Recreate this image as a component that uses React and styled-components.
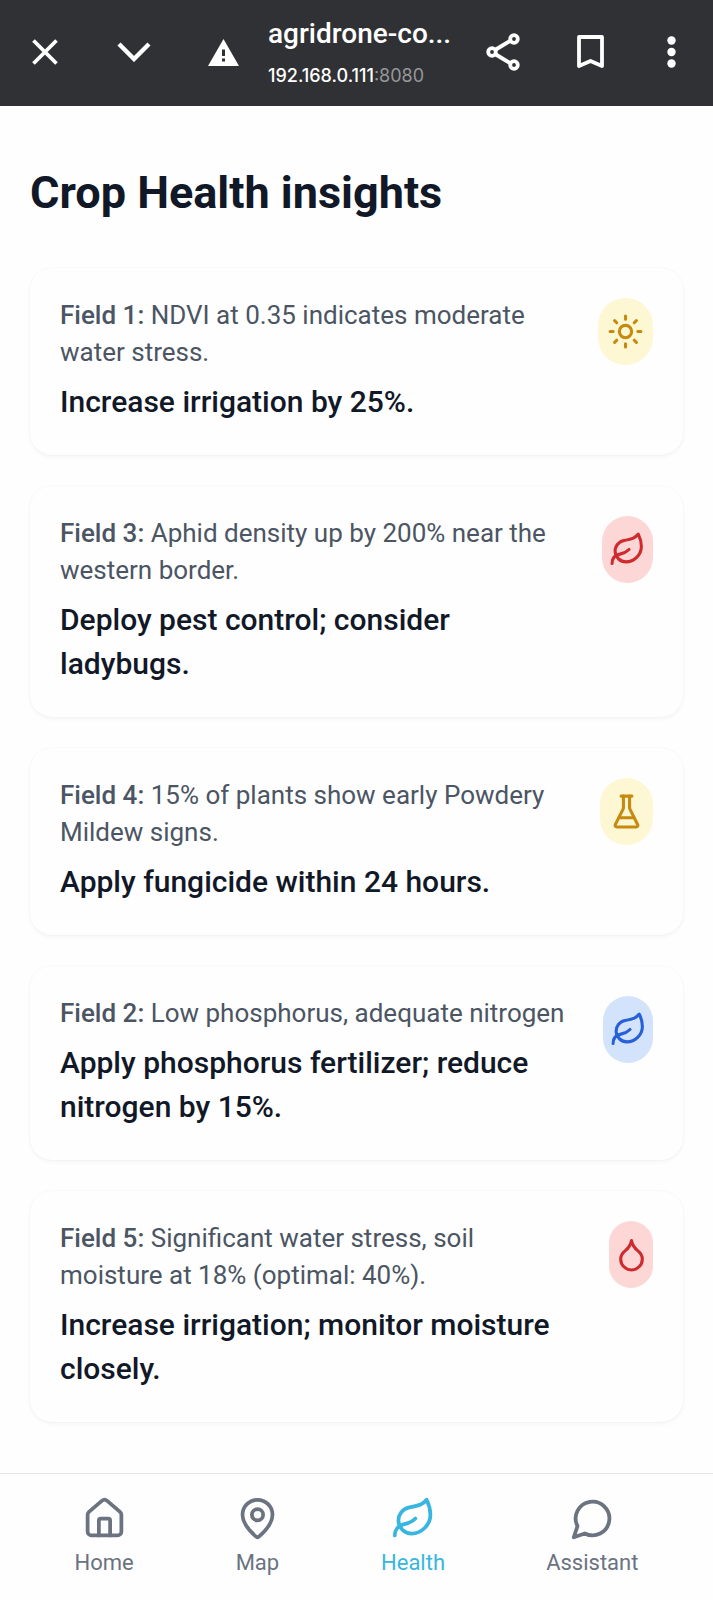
import React from "react";
import styled, { createGlobalStyle } from "styled-components";

const GlobalStyle = createGlobalStyle`
  *, *::before, *::after { box-sizing: border-box; }
  body {
    margin: 0;
    background: #fefefe;
    color: #111827;
    font-family: Roboto, "Liberation Sans", sans-serif;
  }
`;

const Page = styled.div`
  min-height: 100vh;
  display: flex;
  flex-direction: column;
`;

const BrowserBar = styled.header`
  display: flex;
  align-items: center;
  height: 106px;
  padding: 0 15px 2px 18px;
  background: #303134;
  color: #fff;
`;

const BarButton = styled.button`
  display: grid;
  place-items: center;
  flex: none;
  width: 54px;
  height: 54px;
  margin: 0 ${(p) => p.$gap || 0}px 0 0;
  padding: 0;
  border: 0;
  background: none;
  color: inherit;
`;

const Address = styled.div`
  flex: 1;
  min-width: 0;
  padding-top: 6px;
`;

const SiteTitle = styled.div`
  font-size: 28px;
  line-height: 40px;
  font-weight: 500;
  white-space: nowrap;
`;

const SiteHost = styled.div`
  padding-top: 2px;
  font-family: Inter, Roboto, sans-serif;
  font-size: 18px;
  line-height: 40px;
  font-weight: 500;
`;

const Port = styled.span`
  color: #96979a;
  font-weight: 400;
`;

const Main = styled.main`
  flex: 1;
  padding: 60px 30px 50px;
`;

const Title = styled.h1`
  margin: 0 0 48px;
  font-size: 45px;
  line-height: 54px;
  font-weight: 700;
`;

const CardList = styled.div`
  display: grid;
  gap: 31px;
`;

const Card = styled.article`
  display: flex;
  justify-content: space-between;
  align-items: flex-start;
  gap: 30px;
  padding: 29px 30px 31px;
  border-radius: 22px;
  background: #fefefe;
  box-shadow: 0 2px 4px rgba(0, 0, 0, 0.04), 0 0 2px rgba(0, 0, 0, 0.05);
`;

const CardText = styled.div`
  flex: 1;
  min-width: 0;
`;

const Finding = styled.p`
  margin: 0 0 9px;
  font-size: 26px;
  line-height: 37px;
  color: #4b5563;
`;

const Field = styled.span`
  font-weight: 500;
`;

const Advice = styled.p`
  margin: 0;
  font-size: 30px;
  line-height: 44px;
  font-weight: 500;
`;

const tones = {
  yellow: { back: "#fef7d3", ink: "#c58a0e" },
  red: { back: "#fdd6d6", ink: "#cf2a2e" },
  blue: { back: "#d3e3fc", ink: "#2860d8" },
};

const Badge = styled.div`
  display: grid;
  place-items: center;
  flex: none;
  width: ${(p) => p.$width}px;
  height: 67px;
  margin-top: 1px;
  border-radius: 34px;
  background: ${(p) => tones[p.$tone].back};
  color: ${(p) => tones[p.$tone].ink};
`;

const TabBar = styled.nav`
  display: flex;
  justify-content: space-around;
  padding: 22px 24px 19px;
  border-top: 1px solid #e5e7eb;
`;

const Tab = styled.a`
  display: flex;
  flex-direction: column;
  align-items: center;
  gap: 4px;
  font-size: 22px;
  line-height: 36px;
  text-decoration: none;
  color: ${(p) => (p.$active ? "#38b6e0" : "#6b7280")};
`;

const Line = styled.svg`
  display: block;
  fill: none;
  stroke: currentColor;
  stroke-width: 2;
  stroke-linecap: round;
  stroke-linejoin: round;
`;

const shapes = {
  sun: (
    <>
      <circle cx="12" cy="12" r="4" />
      <path d="M12 2v2M12 20v2M4.93 4.93l1.41 1.41M17.66 17.66l1.41 1.41M2 12h2M20 12h2M6.34 17.66l-1.41 1.41M19.07 4.93l-1.41 1.41" />
    </>
  ),
  leaf: (
    <>
      <path d="M11 20A7 7 0 0 1 9.8 6.1C15.5 5 17 4.48 19 2c1 2 2 4.18 2 8 0 5.5-4.78 10-10 10Z" />
      <path d="M2 21c0-3 1.85-5.36 5.08-6C9.5 14.52 12 13 13 12" />
    </>
  ),
  flask: (
    <>
      <path d="M10 2v7.527a2 2 0 0 1-.211.896L4.72 20.55a1 1 0 0 0 .9 1.45h12.76a1 1 0 0 0 .9-1.45l-5.069-10.127A2 2 0 0 1 14 9.527V2" />
      <path d="M8.5 2h7M7 16h10" />
    </>
  ),
  drop: (
    <path d="M12 22a7 7 0 0 0 7-7c0-2-1-3.9-3-5.5s-3.5-4-4-6.5c-.5 2.5-2 4.9-4 6.5C6 11.1 5 13 5 15a7 7 0 0 0 7 7z" />
  ),
  home: (
    <>
      <path d="M15 21v-8a1 1 0 0 0-1-1h-4a1 1 0 0 0-1 1v8" />
      <path d="M3 10a2 2 0 0 1 .709-1.528l7-5.999a2 2 0 0 1 2.582 0l7 5.999A2 2 0 0 1 21 10v9a2 2 0 0 1-2 2H5a2 2 0 0 1-2-2z" />
    </>
  ),
  pin: (
    <>
      <path d="M20 10c0 4.993-5.539 10.193-7.399 11.799a1 1 0 0 1-1.202 0C9.539 20.193 4 14.993 4 10a8 8 0 0 1 16 0" />
      <circle cx="12" cy="10" r="3" />
    </>
  ),
  chat: <path d="M7.9 20A9 9 0 1 0 4 16.1L2 22Z" />,
};

const Icon = ({ name, size }) => (
  <Line width={size} height={size} viewBox="0 0 24 24" aria-hidden="true">
    {shapes[name]}
  </Line>
);

const insights = [
  { field: "Field 1:", text: "NDVI at 0.35 indicates moderate water stress.", advice: "Increase irrigation by 25%.", icon: "sun", tone: "yellow", width: 55 },
  { field: "Field 3:", text: "Aphid density up by 200% near the western border.", advice: "Deploy pest control; consider ladybugs.", icon: "leaf", tone: "red", width: 51 },
  { field: "Field 4:", text: "15% of plants show early Powdery Mildew signs.", advice: "Apply fungicide within 24 hours.", icon: "flask", tone: "yellow", width: 53 },
  { field: "Field 2:", text: "Low phosphorus, adequate nitrogen", advice: "Apply phosphorus fertilizer; reduce nitrogen by 15%.", icon: "leaf", tone: "blue", width: 50 },
  { field: "Field 5:", text: "Significant water stress, soil moisture at 18% (optimal: 40%).", advice: "Increase irrigation; monitor moisture closely.", icon: "drop", tone: "red", width: 44 },
];

const tabs = [
  { label: "Home", icon: "home" },
  { label: "Map", icon: "pin" },
  { label: "Health", icon: "leaf", active: true },
  { label: "Assistant", icon: "chat" },
];

export default function App() {
  return (
    <Page>
      <GlobalStyle />
      <BrowserBar>
        <BarButton aria-label="Close" $gap={35}>
          <svg width="26" height="26" viewBox="0 0 26 26" fill="none" stroke="currentColor" strokeWidth="3.8">
            <path d="M1.5 1.5l23 23M24.5 1.5l-23 23" />
          </svg>
        </BarButton>
        <BarButton aria-label="Minimize" $gap={35}>
          <svg width="34" height="20" viewBox="0 0 34 20" fill="none" stroke="currentColor" strokeWidth="4.4">
            <path d="M2 2l15 15L32 2" />
          </svg>
        </BarButton>
        <BarButton aria-label="Site information" $gap={18}>
          <svg width="31" height="27" viewBox="0 0 31 27" fill="currentColor">
            <path fillRule="evenodd" d="M15.5 0L31 27H0zM14 10.5v6.5h3v-6.5zM14 19.5v3h3v-3z" />
          </svg>
        </BarButton>
        <Address>
          <SiteTitle>agridrone-co...</SiteTitle>
          <SiteHost>
            192.168.0.111<Port>:8080</Port>
          </SiteHost>
        </Address>
        <BarButton aria-label="Share" $gap={33}>
          <svg width="34" height="38" viewBox="0 0 34 38" fill="none" stroke="currentColor" strokeWidth="3.8">
            <path d="M9 17L24 8M9 21l15 9" />
            <circle cx="6" cy="19" r="3.8" />
            <circle cx="28" cy="6" r="3.8" />
            <circle cx="28" cy="32" r="3.8" />
          </svg>
        </BarButton>
        <BarButton aria-label="Bookmark" $gap={27}>
          <svg width="27" height="34" viewBox="0 0 27 34" fill="none" stroke="currentColor" strokeWidth="3.8" strokeLinejoin="round">
            <path d="M2 2h23v29l-11.5-5L2 31z" />
          </svg>
        </BarButton>
        <BarButton aria-label="More options">
          <svg width="9" height="32" viewBox="0 0 9 32" fill="currentColor">
            <circle cx="4.5" cy="4.5" r="4.2" />
            <circle cx="4.5" cy="16" r="4.2" />
            <circle cx="4.5" cy="27.5" r="4.2" />
          </svg>
        </BarButton>
      </BrowserBar>
      <Main>
        <Title>Crop Health insights</Title>
        <CardList>
          {insights.map((item) => (
            <Card key={item.field}>
              <CardText>
                <Finding>
                  <Field>{item.field}</Field> {item.text}
                </Finding>
                <Advice>{item.advice}</Advice>
              </CardText>
              <Badge $tone={item.tone} $width={item.width}>
                <Icon name={item.icon} size={37} />
              </Badge>
            </Card>
          ))}
        </CardList>
      </Main>
      <TabBar>
        {tabs.map((tab) => (
          <Tab key={tab.label} href={"#" + tab.label.toLowerCase()} $active={tab.active} aria-current={tab.active ? "page" : undefined}>
            <Icon name={tab.icon} size={45} />
            {tab.label}
          </Tab>
        ))}
      </TabBar>
    </Page>
  );
}
